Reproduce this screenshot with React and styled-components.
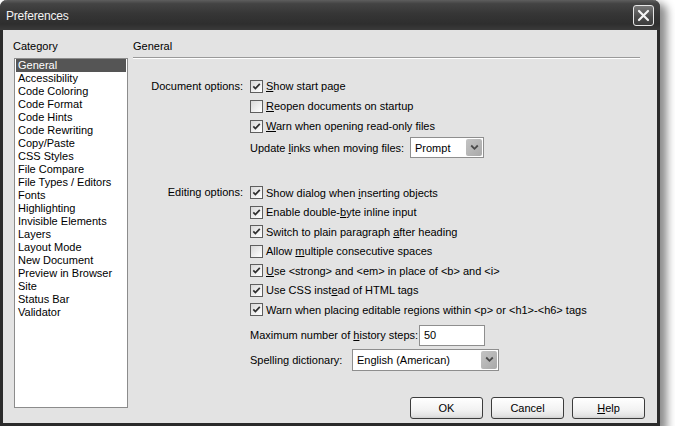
import styled, { createGlobalStyle } from "styled-components";

const GlobalStyle = createGlobalStyle`
  html, body { margin: 0; padding: 0; background: #ffffff; }
  body {
    font-family: "Liberation Sans", Arial, sans-serif;
    font-size: 11px;
    color: #000;
  }
`;

const categories = [
  "General", "Accessibility", "Code Coloring", "Code Format", "Code Hints",
  "Code Rewriting", "Copy/Paste", "CSS Styles", "File Compare",
  "File Types / Editors", "Fonts", "Highlighting", "Invisible Elements",
  "Layers", "Layout Mode", "New Document", "Preview in Browser", "Site",
  "Status Bar", "Validator",
];

const Check = ({ checked }) => (
  <CheckBox>
    {checked && (
      <svg width="11" height="11" viewBox="0 0 11 11">
        <path d="M2.3 5.4 L4.4 7.6 L8.8 2.9" fill="none" stroke="#2e2e2e" strokeWidth="1.7" />
      </svg>
    )}
  </CheckBox>
);

const Arrow = () => (
  <SelectArrow>
    <svg width="9" height="7" viewBox="0 0 9 7">
      <path d="M1.2 1.5 L4.5 4.8 L7.8 1.5" fill="none" stroke="#4a4a4a" strokeWidth="1.8" />
    </svg>
  </SelectArrow>
);

const App = () => {
  return (
    <>
      <GlobalStyle />
      <Window>
        <TitleBar>
          <Title>Preferences</Title>
          <CloseButton>
            <svg width="13" height="13" viewBox="0 0 13 13">
              <path d="M2 2 L11 11 M11 2 L2 11" stroke="#f4f4f4" strokeWidth="2.2" strokeLinecap="round" />
            </svg>
          </CloseButton>
        </TitleBar>
        <Body>
          <LeftColumn>
            <ColumnLabel>Category</ColumnLabel>
            <CategoryList>
              {categories.map((c, i) => (
                <CategoryItem key={c} $selected={i === 0}>{c}</CategoryItem>
              ))}
            </CategoryList>
          </LeftColumn>

          <RightColumn>
            <PanelHeader>General</PanelHeader>

            <Section $top={18}>
              <SectionLabel $h={20}>Document options:</SectionLabel>
              <Options>
                <OptionRow $h={20}><Check checked /><span><Key>S</Key>how start page</span></OptionRow>
                <OptionRow $h={20}><Check /><span><Key>R</Key>eopen documents on startup</span></OptionRow>
                <OptionRow $h={20}><Check checked /><span><Key>W</Key>arn when opening read-only files</span></OptionRow>
                <OptionRow $h={21} $top={1}>
                  <FieldLabel $w={160}>Update <Key>l</Key>inks when moving files:</FieldLabel>
                  <Select $w={74} $h={21}><SelectValue>Prompt</SelectValue><Arrow /></Select>
                </OptionRow>
              </Options>
            </Section>

            <Section $top={25}>
              <SectionLabel $h={19.5}>Editing options:</SectionLabel>
              <Options>
                <OptionRow $h={19.5}><Check checked /><span>Show dialog when <Key>i</Key>nserting objects</span></OptionRow>
                <OptionRow $h={19.5}><Check checked /><span>Enable double-<Key>b</Key>yte inline input</span></OptionRow>
                <OptionRow $h={19.5}><Check checked /><span>Switch to plain paragraph <Key>a</Key>fter heading</span></OptionRow>
                <OptionRow $h={19.5}><Check /><span>Allow <Key>m</Key>ultiple consecutive spaces</span></OptionRow>
                <OptionRow $h={19.5}><Check checked /><span><Key>U</Key>se &lt;strong&gt; and &lt;em&gt; in place of &lt;b&gt; and &lt;i&gt;</span></OptionRow>
                <OptionRow $h={19.5}><Check checked /><span>Use CSS inst<Key>e</Key>ad of HTML tags</span></OptionRow>
                <OptionRow $h={19.5}><Check checked /><span>Warn when placing editable regions within &lt;p&gt; or &lt;h1&gt;-&lt;h6&gt; tags</span></OptionRow>
                <OptionRow $h={21} $top={5}>
                  <FieldLabel $w={169}>Maximum number of <Key>h</Key>istory steps:</FieldLabel>
                  <TextInput $w={66}>50</TextInput>
                </OptionRow>
                <OptionRow $h={22} $top={3}>
                  <FieldLabel $w={102}>Spellin<Key>g</Key> dictionary:</FieldLabel>
                  <Select $w={147} $h={22}><SelectValue>English (American)</SelectValue><Arrow /></Select>
                </OptionRow>
              </Options>
            </Section>

            <Spacer />
            <ButtonBar>
              <Button>OK</Button>
              <Button>Cancel</Button>
              <Button><Key>H</Key>elp</Button>
            </ButtonBar>
          </RightColumn>
        </Body>
      </Window>
    </>
  );
};

export default App;

const Window = styled.div`
  width: 660px;
  height: 426px;
  box-sizing: border-box;
  display: flex;
  flex-direction: column;
  background: #e3e3e3;
  border: 3px solid #2b2b2b;
  border-top: none;
  border-radius: 7px 7px 0 0;
  box-shadow: 5px 5px 9px 2px rgba(0, 0, 0, 0.45);
`;

const TitleBar = styled.div`
  height: 30px;
  margin: 0 -3px;
  padding: 0 6px 0 9px;
  display: flex;
  align-items: center;
  justify-content: space-between;
  border-radius: 7px 7px 0 0;
  background: linear-gradient(#5e5e5e 0%, #444 12%, #363636 45%, #2e2e2e 80%, #3a3a3a 100%);
`;

const Title = styled.div`
  color: #f2f2f2;
  font-size: 12px;
  letter-spacing: -0.2px;
  margin-left: -3px;
  margin-top: 2px;
`;

const CloseButton = styled.div`
  width: 21px;
  height: 21px;
  box-sizing: border-box;
  border: 1px solid #e6e6e6;
  border-radius: 3px;
  display: flex;
  align-items: center;
  justify-content: center;
  background: linear-gradient(#777, #4a4a4a 60%, #3c3c3c);
  margin-top: 1px;
`;

const Body = styled.div`
  flex: 1;
  display: flex;
  gap: 5px;
  padding: 10px 12px 4px 11px;
  min-height: 0;
`;

const LeftColumn = styled.div`
  width: 114px;
  display: flex;
  flex-direction: column;
`;

const ColumnLabel = styled.div`
  line-height: 13px;
  height: 18px;
  margin-left: -1px;
`;

const CategoryList = styled.div`
  height: 350px;
  box-sizing: border-box;
  background: #fff;
  border: 1px solid #8c8c8c;
  padding: 0 1px;
`;

const CategoryItem = styled.div`
  height: 13px;
  line-height: 13px;
  padding-left: 2px;
  white-space: nowrap;
  background: ${(p) => (p.$selected ? "#555555" : "transparent")};
  color: ${(p) => (p.$selected ? "#ffffff" : "#000")};
`;

const RightColumn = styled.div`
  flex: 1;
  display: flex;
  flex-direction: column;
`;

const PanelHeader = styled.div`
  line-height: 13px;
  padding-bottom: 4px;
  margin-right: 5px;
  border-bottom: 1px solid #9a9a9a;
  box-shadow: 0 1px 0 #fff;
`;

const Section = styled.div`
  display: flex;
  margin-top: ${(p) => p.$top}px;
`;

const SectionLabel = styled.div`
  width: 117px;
  flex-shrink: 0;
  box-sizing: border-box;
  padding-right: 7px;
  text-align: right;
  line-height: ${(p) => p.$h}px;
  white-space: nowrap;
`;

const Options = styled.div`
  display: flex;
  flex-direction: column;
`;

const OptionRow = styled.div`
  display: flex;
  align-items: center;
  height: ${(p) => p.$h}px;
  margin-top: ${(p) => p.$top || 0}px;
  white-space: nowrap;
`;

const CheckBox = styled.span`
  width: 13px;
  height: 13px;
  box-sizing: border-box;
  flex-shrink: 0;
  margin-right: 3px;
  border: 1px solid #5e5e5e;
  background: linear-gradient(135deg, #d8d8d8, #f4f4f4 70%, #fff);
  display: flex;
  align-items: center;
  justify-content: center;
`;

const Key = styled.u`
  text-decoration: underline;
  text-underline-offset: 1px;
`;

const FieldLabel = styled.span`
  width: ${(p) => p.$w}px;
  flex-shrink: 0;
`;

const Select = styled.div`
  width: ${(p) => p.$w}px;
  height: ${(p) => p.$h}px;
  box-sizing: border-box;
  border: 1px solid #8e8e8e;
  background: #fff;
  display: flex;
  align-items: center;
  padding: 1px;
`;

const SelectValue = styled.span`
  flex: 1;
  padding-left: 3px;
`;

const SelectArrow = styled.span`
  width: 16px;
  align-self: stretch;
  display: flex;
  align-items: center;
  justify-content: center;
  border-radius: 2px;
  background: linear-gradient(135deg, #c4c4c4, #a9a9a9);
`;

const TextInput = styled.div`
  width: ${(p) => p.$w}px;
  height: 21px;
  box-sizing: border-box;
  border: 1px solid #8e8e8e;
  background: #fff;
  padding-left: 4px;
  line-height: 19px;
`;

const Spacer = styled.div`
  flex: 1;
`;

const ButtonBar = styled.div`
  display: flex;
  justify-content: flex-end;
  gap: 8px;
`;

const Button = styled.div`
  width: 73px;
  height: 22px;
  box-sizing: border-box;
  border: 1px solid #3c3c3c;
  border-radius: 3px;
  background: linear-gradient(#ffffff, #f2f2f2 60%, #e2e2e2 90%, #d0d0d0);
  display: flex;
  align-items: center;
  justify-content: center;
`;
